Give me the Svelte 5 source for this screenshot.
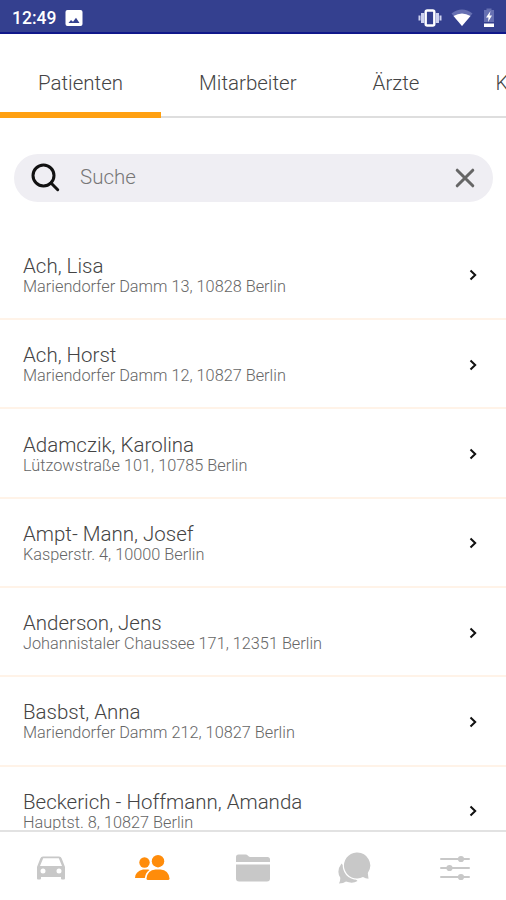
<script lang="ts">
  type Patient = {
    name: string
    address: string
  }

  const tabs = ['Patienten', 'Mitarbeiter', 'Ärzte', 'Kassen']

  const patients: Patient[] = [
    { name: 'Ach, Lisa', address: 'Mariendorfer Damm 13, 10828 Berlin' },
    { name: 'Ach, Horst', address: 'Mariendorfer Damm 12, 10827 Berlin' },
    { name: 'Adamczik, Karolina', address: 'Lützowstraße 101, 10785 Berlin' },
    { name: 'Ampt- Mann, Josef', address: 'Kasperstr. 4, 10000 Berlin' },
    { name: 'Anderson, Jens', address: 'Johannistaler Chaussee 171, 12351 Berlin' },
    { name: 'Basbst, Anna', address: 'Mariendorfer Damm 212, 10827 Berlin' },
    { name: 'Beckerich - Hoffmann, Amanda', address: 'Hauptst. 8, 10827 Berlin' },
  ]

  let activeTab = $state(0)
  let query = $state('')

  let visible = $derived(
    patients.filter((p) => p.name.toLowerCase().includes(query.toLowerCase())),
  )
</script>

<div class="screen">
  <header class="status-bar">
    <span class="time">12:49</span>
    <svg class="picture" width="18" height="18" viewBox="0 0 18 18">
      <rect x="0.5" y="1" width="17" height="16" rx="2" fill="#fff" />
      <path d="M3.5 14l2.500-3 2 1.800 3-4L14.500 14z" fill="#34408f" />
    </svg>
    <span class="spacer"></span>
    <svg class="vibrate" width="24" height="18" viewBox="0 0 24 18">
      <rect x="7.7" y="1.5" width="8.6" height="15" rx="1.5" fill="none" stroke="#fff" stroke-width="2.4" />
      <path d="M4.700 4v10M19.300 4v10" stroke="#cdd2ef" stroke-width="3.4" />
      <path d="M1.500 6.500v5M22.500 6.500v5" stroke="#cdd2ef" stroke-width="2" />
    </svg>
    <svg class="wifi" width="22" height="18" viewBox="0 0 22 18">
      <path d="M0.500 4.500Q11-3.500 21.500 4.500L11 17z" fill="#6670b2" />
      <path d="M2.500 7Q11 2 19.500 7L11 17z" fill="#fff" />
    </svg>
    <svg class="battery" width="12" height="20" viewBox="0 0 12 20">
      <path d="M3.500 2V0.500h5V2H11v12H1V2z" fill="#6670b2" />
      <path d="M1 15.500h10v3.500H1z" fill="#fff" />
      <path d="M7.500 3L3 9.500h2.500L5 14l4-6.500H6.500z" fill="#fff" />
    </svg>
  </header>

  <nav class="tabs">
    {#each tabs as tab, index (tab)}
      <button
        type="button"
        class="tab"
        class:active={index === activeTab}
        onclick={() => (activeTab = index)}>{tab}</button
      >
    {/each}
  </nav>

  <div class="search">
    <svg width="30" height="30" viewBox="0 0 30 30" fill="none" stroke="#111" stroke-width="3">
      <circle cx="12.5" cy="12.5" r="10.500" />
      <path d="M20 20l6.700 6.700" stroke-linecap="round" />
    </svg>
    <input type="text" placeholder="Suche" bind:value={query} />
    <button type="button" class="clear" aria-label="Löschen" onclick={() => (query = '')}>
      <svg width="20" height="20" viewBox="0 0 20 20" stroke="#666" stroke-width="3" stroke-linecap="round">
        <path d="M2.200 2.200l15.600 15.600M17.800 2.200L2.200 17.800" />
      </svg>
    </button>
  </div>

  <ul class="list">
    {#each visible as patient (patient.name)}
      <li class="row">
        <div class="person">
          <span class="name">{patient.name}</span>
          <span class="address">{patient.address}</span>
        </div>
        <svg width="8" height="12" viewBox="0 0 8 12" fill="none" stroke="#111" stroke-width="2">
          <path d="M1.500 1.500L6.200 6L1.500 10.500" />
        </svg>
      </li>
    {/each}
  </ul>

  <footer class="bottom-bar">
    <button type="button" aria-label="Touren">
      <svg width="30" height="26" viewBox="0 0 30 26">
        <path
          fill="#c8c8c8"
          fill-rule="evenodd"
          d="M7 1.500h16q2 0 2.700 2L29 12v11.500q0 1-1 1h-2q-1 0-1-1V22H5v1.500q0 1-1 1H2q-1 0-1-1V12L4.300 3.500Q5 1.500 7 1.500zM7.200 3.300L4 11h22l-3.200-7.700zM7 13.500a2.500 2.500 0 100 5 2.500 2.500 0 000-5zM23 13.500a2.500 2.500 0 100 5 2.500 2.500 0 000-5z"
        />
      </svg>
    </button>
    <button type="button" aria-label="Personen">
      <svg width="36" height="28" viewBox="0 0 36 28" fill="#ff8c0a">
        <circle cx="10.500" cy="8.500" r="5.200" />
        <circle cx="24" cy="7.200" r="6.200" />
        <path d="M1 24q0-6.500 8-8.500h5q1 0 1.500.500-4 2.500-4.700 8z" />
        <path d="M12.500 24.500q1-8.500 9-9h5q8 .500 9 9 0 1.500-1.500 1.500H14q-1.500 0-1.500-1.500z" />
      </svg>
    </button>
    <button type="button" aria-label="Dokumente">
      <svg width="36" height="30" viewBox="0 0 36 30" fill="#c8c8c8">
        <path d="M1 9V4q0-2.500 2.500-2.500h7q1.500 0 2.500 1.200T15.500 4h17Q35 4 35 6.500V9z" />
        <path d="M1 11.500h34v14q0 3-3 3H4q-3 0-3-3z" />
      </svg>
    </button>
    <button type="button" aria-label="Nachrichten">
      <svg width="34" height="34" viewBox="0 0 34 34">
        <path
          d="M4.500 12.500Q-1 20 3.200 26.500q.300 3.500-1.200 6 4.500 0 7-2 6.500 2.500 11.500-.500z"
          fill="#c8c8c8"
        />
        <path
          d="M19.500 1.500a13 13 0 1 0 6.500 24.500q2.500 1.500 5.500 1.800l-.700-5.800A13 13 0 0 0 19.500 1.500z"
          fill="#c8c8c8"
          stroke="#fff"
          stroke-width="2.4"
          paint-order="stroke"
        />
      </svg>
    </button>
    <button type="button" aria-label="Einstellungen">
      <svg width="32" height="28" viewBox="0 0 32 28" fill="#c8c8c8" stroke="#c8c8c8">
        <path d="M2 5h28M2 14h28M2 23h28" stroke-width="2" stroke-linecap="round" />
        <g stroke="none">
          <circle cx="22" cy="5" r="3.100" />
          <circle cx="10.500" cy="14" r="3.100" />
          <circle cx="22" cy="23" r="3.100" />
        </g>
      </svg>
    </button>
  </footer>
</div>

<style>
  :global(body) {
    margin: 0;
  }

  .screen {
    display: flex;
    flex-direction: column;
    width: 506px;
    height: 900px;
    overflow: hidden;
    background: #fff;
    font-family: Roboto, sans-serif;
    font-weight: 300;
    color: #444;
  }

  button {
    padding: 0;
    border: 0;
    background: none;
    font: inherit;
    color: inherit;
  }

  svg {
    display: block;
    flex-shrink: 0;
  }

  .status-bar {
    display: flex;
    align-items: center;
    box-sizing: border-box;
    height: 34px;
    flex-shrink: 0;
    padding: 3px 11px 0 12px;
    border-bottom: 2px solid #10188a;
    background: #34408f;
    color: #fff;
  }

  .time {
    font-size: 17.5px;
    font-weight: 500;
    width: 53px;
  }

  .spacer {
    flex: 1;
  }

  .vibrate {
    margin-right: 9px;
  }

  .battery {
    margin-left: 10px;
  }

  .tabs {
    display: flex;
    flex-shrink: 0;
    box-sizing: border-box;
    height: 84px;
    overflow: hidden;
    box-shadow: inset 0 -2px #dedede;
  }

  .tab {
    flex-shrink: 0;
    box-sizing: border-box;
    padding: 20px 38px 0;
    border-bottom: 6px solid transparent;
    font-size: 20.5px;
  }

  .tab.active {
    border-bottom-color: #ffa011;
  }

  .search {
    display: flex;
    align-items: center;
    flex-shrink: 0;
    box-sizing: border-box;
    height: 48px;
    margin: 35.5px 13px 29.3px 14px;
    padding: 0 18px 0 17px;
    border-radius: 24px;
    background: #efeef3;
  }

  .search input {
    flex: 1;
    min-width: 0;
    padding: 0 0 1px;
    margin-left: 19px;
    border: 0;
    outline: 0;
    background: none;
    font: inherit;
    font-size: 20.5px;
  }

  .search input::placeholder {
    color: #777;
    opacity: 1;
  }

  .list {
    flex: 1;
    min-height: 0;
    margin: 0;
    padding: 0;
    list-style: none;
    overflow: hidden;
  }

  .row {
    display: flex;
    align-items: center;
    justify-content: space-between;
    box-sizing: border-box;
    height: 89.3px;
    padding: 2px 29px 0 23px;
    border-bottom: 2px solid #fff3e8;
  }

  .person {
    display: flex;
    flex-direction: column;
  }

  .name {
    font-size: 20.5px;
    line-height: 23px;
  }

  .address {
    font-size: 16.3px;
    line-height: 18px;
    color: #666;
  }

  .bottom-bar {
    display: flex;
    align-items: center;
    flex-shrink: 0;
    box-sizing: border-box;
    height: 70px;
    padding-top: 4px;
    border-top: 2px solid #e2e2e2;
    background: #fff;
  }

  .bottom-bar button {
    display: flex;
    flex: 1;
    justify-content: center;
  }
</style>
